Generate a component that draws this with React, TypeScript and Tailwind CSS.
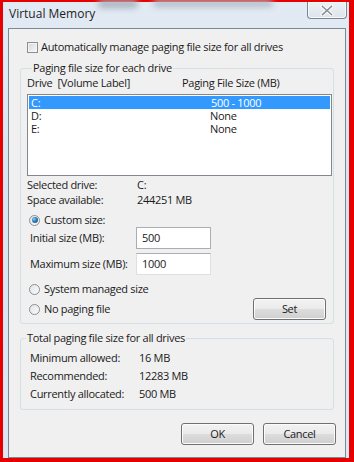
import React from "react";

const font = { fontFamily: '"Open Sans", "Noto Sans", sans-serif' };

function Radio({ checked }: { checked?: boolean }) {
  return (
    <span className="relative inline-flex h-[11px] w-[11px] shrink-0 items-center justify-center rounded-full border border-[#8a8f96] bg-gradient-to-br from-[#e4e4e4] to-[#fbfbfb]">
      {checked && (
        <span className="h-[6px] w-[6px] rounded-full bg-[radial-gradient(circle_at_35%_35%,#8fd0f0_0%,#2a7bb5_45%,#17456e_100%)]" />
      )}
    </span>
  );
}

function Btn({ children, w }: { children: React.ReactNode; w: string }) {
  return (
    <div
      className={`${w} flex h-[22px] items-center justify-center rounded-[3px] border border-[#707070] bg-[linear-gradient(#f2f2f2_0%,#ebebeb_48%,#dddddd_50%,#cfcfcf_100%)] text-[11px] text-[#1a1a1a] shadow-[inset_0_0_0_1px_#fbfbfb]`}
    >
      {children}
    </div>
  );
}

export default function App() {
  return (
    <div className="h-[462px] w-[354px] bg-[#e60000] pb-[4px] pl-[3px] pr-[5px] pt-[2px]" style={font}>
      <div className="relative flex h-full w-full flex-col bg-[linear-gradient(#e2ebf4,#d8e4f0_40%,#dde8f3)]">
        {/* blurred background smudges */}
        <div className="pointer-events-none absolute left-[95px] top-[-2px] h-[8px] w-[40px] rounded-full bg-[#a9b3bd] blur-[3px]" />
        <div className="pointer-events-none absolute left-[150px] top-[-2px] h-[7px] w-[120px] rounded-full bg-[#b3bcc6] blur-[3px]" />
        {/* title bar */}
        <div className="flex h-[26px] shrink-0 items-start justify-between">
          <div className="pl-[6px] pt-[4px] text-[12px] leading-[16px] text-[#1e1e1e]">Virtual Memory</div>
          <div className="mr-[2px] flex h-[17px] w-[40px] items-center justify-center rounded-b-[4px] border border-t-0 border-[#7a8591] bg-[linear-gradient(#eef2f6,#dce3ea)] shadow-[inset_0_0_0_1px_#f7f9fb]">
            <svg width="14" height="11" viewBox="0 0 14 11">
              <path d="M2.5 1.5 L11.5 9.5 M11.5 1.5 L2.5 9.5" stroke="#ffffff" strokeWidth="3.5" strokeLinecap="square" />
              <path d="M2.5 1.5 L11.5 9.5 M11.5 1.5 L2.5 9.5" stroke="#8a9097" strokeWidth="1.6" strokeLinecap="square" />
            </svg>
          </div>
        </div>
        {/* content panel */}
        <div className="ml-[5px] mr-[3px] flex flex-1 flex-col border border-[#7c8894] bg-[#f0f0f0] text-[11px] tracking-[-0.3px] text-[#1a1a1a]">
          <div className="ml-[18px] mt-[10px] flex h-[16px] items-center gap-[3px]">
            <span className="h-[11px] w-[11px] border border-[#8e8f8f] bg-[linear-gradient(135deg,#d6d6d6,#fafafa)] shadow-[inset_0_0_0_1px_#f4f4f4]" />
            <span className="leading-[16px]">Automatically manage paging file size for all drives</span>
          </div>

          <fieldset className="mx-[11px] mt-[6px] rounded-[3px] border border-[#d5dfe5] pb-[3px] pl-[6px] pr-[1px]">
            <legend className="ml-[5px] px-[1px] leading-[14px]">Paging file size for each drive</legend>
            <div className="mt-[1px] flex h-[14px] items-center leading-[14px]">
              <span className="w-[155px]">Drive&nbsp;&nbsp;[Volume Label]</span>
              <span>Paging File Size (MB)</span>
            </div>
            <div className="mt-[4px] h-[82px] border border-[#828790] bg-white p-[1px] leading-[13px]">
              <div className="flex h-[13px] items-center overflow-hidden bg-[#3399ff] text-white">
                <span className="w-[182px] pl-[2px] leading-[13px]">C:</span>
                <span className="leading-[13px]">500 - 1000</span>
              </div>
              <div className="flex h-[13px] items-center overflow-hidden">
                <span className="w-[181px] pl-[2px] leading-[13px]">D:</span>
                <span className="leading-[13px]">None</span>
              </div>
              <div className="flex h-[13px] items-center overflow-hidden">
                <span className="w-[181px] pl-[2px] leading-[13px]">E:</span>
                <span className="leading-[13px]">None</span>
              </div>
            </div>
            <div className="mt-[2px] flex h-[14px] items-center leading-[14px]">
              <span className="w-[110px]">Selected drive:</span>
              <span>C:</span>
            </div>
            <div className="mt-[1px] flex h-[14px] items-center leading-[14px]">
              <span className="w-[110px]">Space available:</span>
              <span>244251 MB</span>
            </div>
            <div className="ml-[2px] mt-[6px] flex h-[14px] items-center gap-[4px] leading-[14px]">
              <Radio checked />
              <span>Custom size:</span>
            </div>
            <div className="flex h-[22px] items-center">
              <span className="w-[109px] pl-[3px]">Initial size (MB):</span>
              <div className="flex h-[22px] w-[75px] items-center border border-[#abadb3] bg-white pl-[5px]">500</div>
            </div>
            <div className="mt-[4px] flex h-[22px] items-center">
              <span className="w-[109px] pl-[3px]">Maximum size (MB):</span>
              <div className="flex h-[22px] w-[75px] items-center border border-[#dcdfe3] border-t-[#abadb3] bg-white pl-[5px]">1000</div>
            </div>
            <div className="ml-[2px] mt-[7px] flex h-[14px] items-center gap-[4px] leading-[14px]">
              <Radio />
              <span>System managed size</span>
            </div>
            <div className="mt-[2px] flex h-[22px] items-center justify-between">
              <div className="ml-[2px] flex items-center gap-[4px]">
                <Radio />
                <span>No paging file</span>
              </div>
              <div className="mr-[6px]">
                <Btn w="w-[73px]">Set</Btn>
              </div>
            </div>
          </fieldset>

          <fieldset className="ml-[11px] mr-[11px] mt-[7px] rounded-[3px] border border-[#d5dfe5] pb-[6px] pl-[9px]">
            <legend className="-ml-[4px] px-[1px] leading-[14px]">Total paging file size for all drives</legend>
            <div className="mt-[4px] flex h-[18px] items-center">
              <span className="w-[109px]">Minimum allowed:</span>
              <span>16 MB</span>
            </div>
            <div className="flex h-[18px] items-center">
              <span className="w-[109px]">Recommended:</span>
              <span>12283 MB</span>
            </div>
            <div className="flex h-[18px] items-center">
              <span className="w-[109px]">Currently allocated:</span>
              <span>500 MB</span>
            </div>
          </fieldset>

          <div className="mr-[9px] mt-[13px] flex justify-end gap-[9px]">
            <Btn w="w-[73px]">OK</Btn>
            <Btn w="w-[73px]">Cancel</Btn>
          </div>
        </div>
      </div>
    </div>
  );
}
